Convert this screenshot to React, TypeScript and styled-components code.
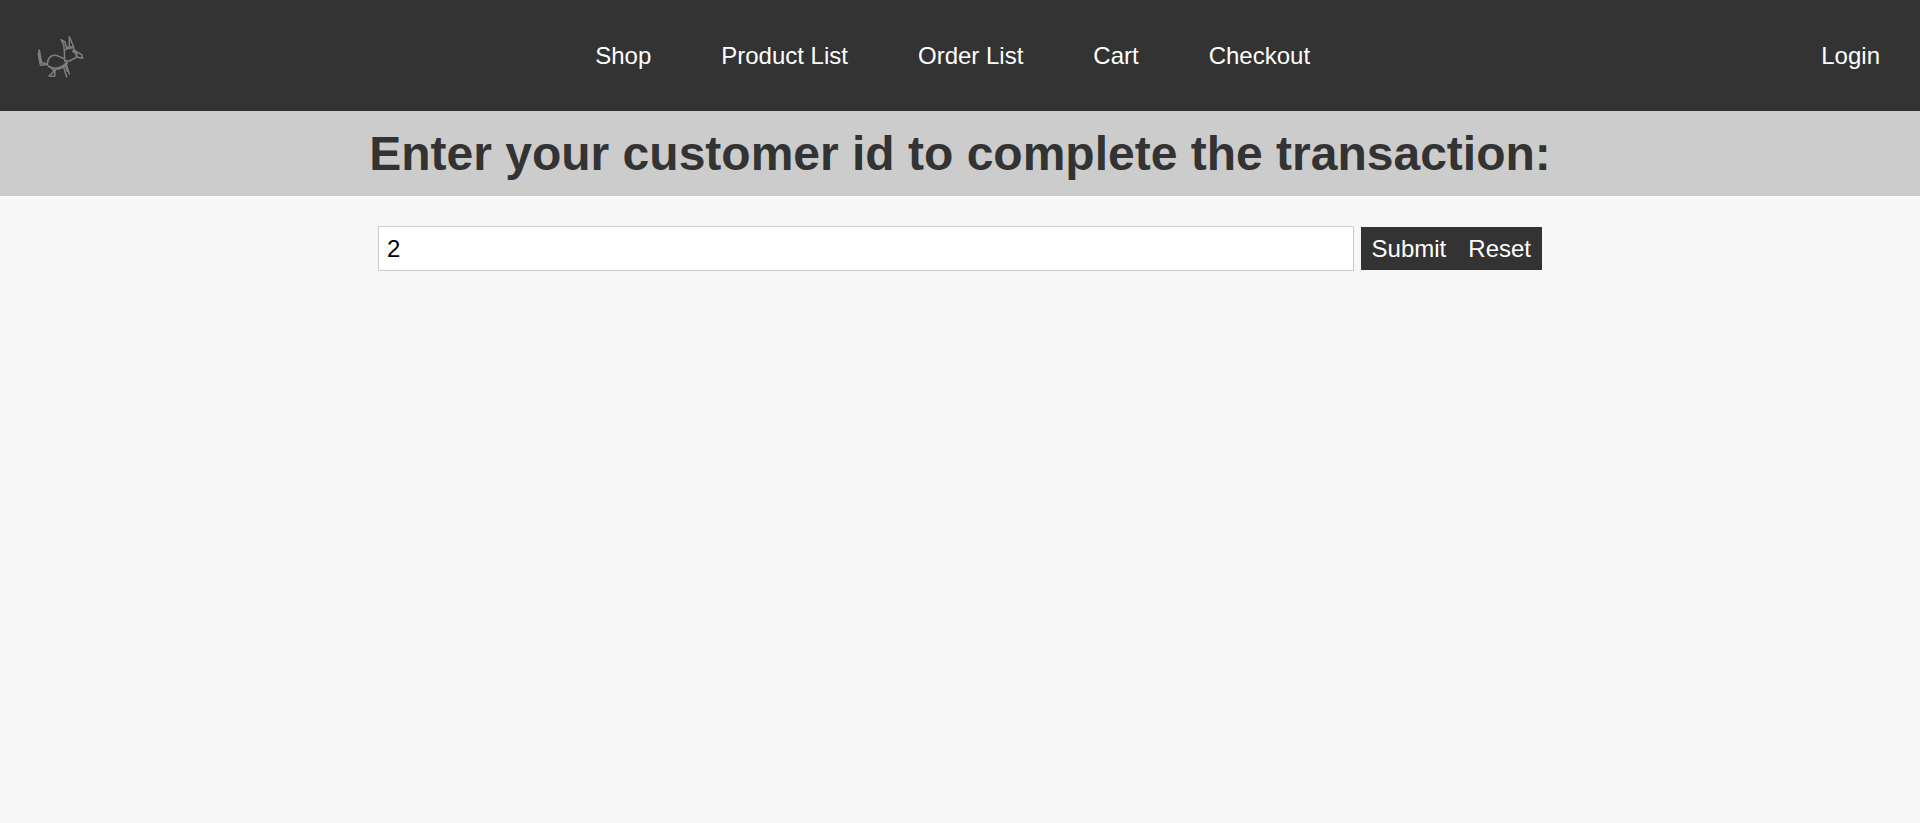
import React from "react";
import styled, { createGlobalStyle } from "styled-components";

const GlobalStyle = createGlobalStyle`
  *, *::before, *::after { box-sizing: border-box; }
  body {
    margin: 0;
    background: #f7f7f7;
    color: #333;
    font-family: Arial, "Liberation Sans", sans-serif;
    font-size: 24px;
  }
`;

const Header = styled.header`
  display: flex;
  align-items: center;
  justify-content: space-between;
  min-height: 111px;
  padding: 0 40px 0 36px;
  background: #333;
`;

const HomeLink = styled.a`
  display: block;
  width: 48px;
  height: 48px;
`;

const Logo = styled.svg`
  display: block;
  width: 100%;
  height: 100%;
  fill: none;
  stroke: #808080;
  stroke-width: 4.4;
  stroke-linecap: round;
  stroke-linejoin: round;
`;

const NavList = styled.nav`
  display: flex;
  gap: 70px;
`;

const NavLink = styled.a`
  color: #fff;
  line-height: 28px;
  text-decoration: none;
`;

const Title = styled.h1`
  margin: 0;
  padding: 15px 0 14px;
  background: #ccc;
  font-size: 48px;
  line-height: 56px;
  text-align: center;
`;

const Form = styled.form`
  display: flex;
  align-items: center;
  gap: 7px;
  max-width: 1164px;
  margin: 30px auto 0;
`;

const IdInput = styled.input`
  flex: 1;
  min-width: 0;
  height: 45px;
  padding: 0 8px;
  border: 1px solid #ccc;
  border-radius: 0;
  background: #fff;
  color: #000;
  font: inherit;
`;

const Buttons = styled.div`
  display: flex;
`;

const Button = styled.button`
  height: 43px;
  padding: 0 11px;
  border: 0;
  background: #333;
  color: #fff;
  font: inherit;
`;

const links = ["Shop", "Product List", "Order List", "Cart", "Checkout"];

export default function App() {
  return (
    <>
      <GlobalStyle />
      <Header>
        <HomeLink href="#" aria-label="Home">
          <Logo viewBox="18 12 144 144" aria-hidden="true">
            <path d="M28 66 L25 80 L31 110 L34 112 L51 109 L41 105 L35 105 L31 85 Z M29 77 L34 103" />
            <path d="M52 107 C54 89 61 82 75 82 C86 82 91 89 103 92" />
            <path d="M51 109 C58 118 66 124 77 123 C91 124 103 117 112 105 L104 98 L103 69 C105 62 115 60 127 59" />
            <path d="M57 115 C77 126 95 118 108 106 M104 98 L118 99 L139 88 L141 76" />
            <path d="M103 67 L101 50 L93 35 L105 42 L110 60 M118 57 L118 26 L131 56 M110 58 L130 56" />
            <path d="M130 57 L133 68 L155 80 L158 91 L140 87 L138 79 M131 69 L139 79" />
            <circle cx="132" cy="70" r="3" />
            <path d="M77 125 L57 144 L74 145 L75 128 M68 126 L73 130 L65 136" />
            <path d="M101 117 L110 147 M107 114 L112 130 M109 109 L118 139" />
          </Logo>
        </HomeLink>
        <NavList aria-label="Main">
          {links.map((label) => (
            <NavLink href="#" key={label}>{label}</NavLink>
          ))}
        </NavList>
        <NavLink href="#">Login</NavLink>
      </Header>
      <main>
        <Title>
          <label htmlFor="customer-id">Enter your customer id to complete the transaction:</label>
        </Title>
        <Form onSubmit={(e) => e.preventDefault()}>
          <IdInput id="customer-id" type="text" defaultValue="2" />
          <Buttons>
            <Button type="submit">Submit</Button>
            <Button type="reset">Reset</Button>
          </Buttons>
        </Form>
      </main>
    </>
  );
}
